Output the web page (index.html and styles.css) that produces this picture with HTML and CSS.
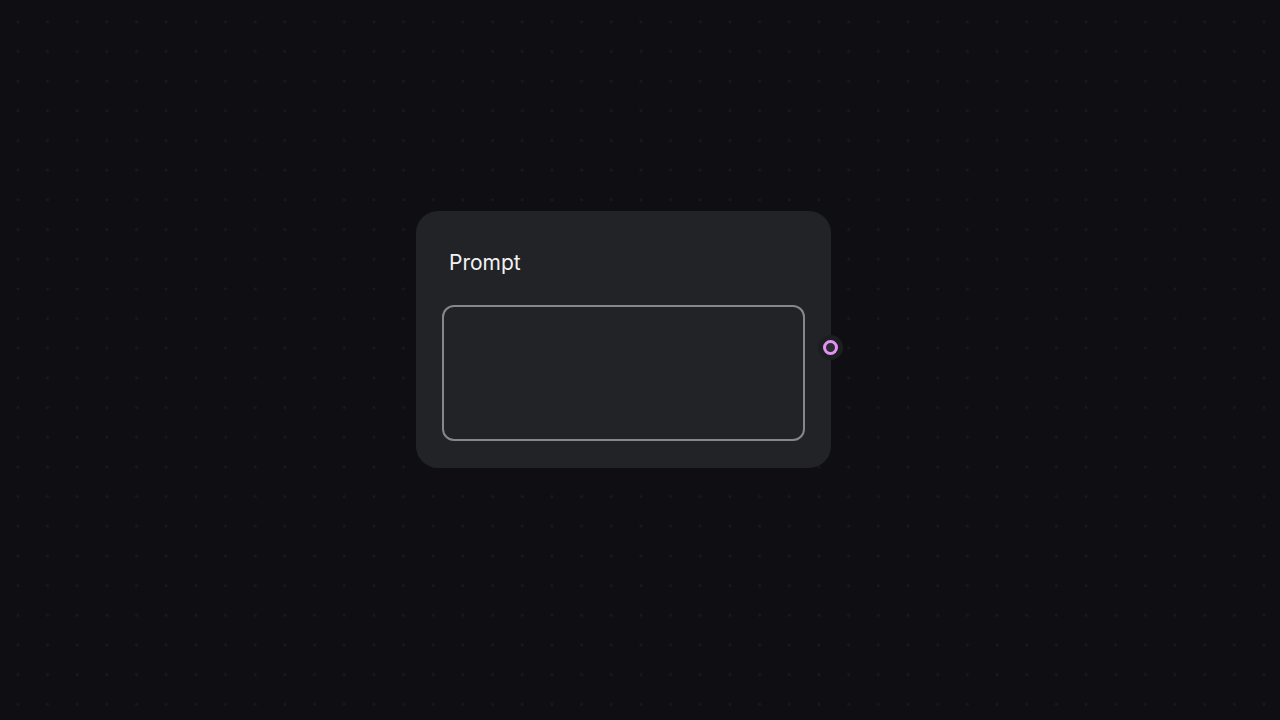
FILE: index.html
```html
<!DOCTYPE html>
<html lang="en">

<head>
    <meta charset="UTF-8">
    <meta name="viewport" content="width=device-width, initial-scale=1.0">
    <title>Prompt Node</title>
    <link rel="stylesheet" href="styles.css">
</head>

<body>
    <div id="canvas">
        <div class="node">
            <h3 class="node-title">Prompt</h3>
            <textarea class="node-input"></textarea>
            <div class="handle"></div>
        </div>
    </div>
</body>

</html>
```

FILE: styles.css
```css
body {
    margin: 0;
    padding: 0;
    font-family: 'Inter', 'Noto Sans', sans-serif;
    background-color: #0f0f13;
    overflow: hidden;
}

#canvas {
    position: relative;
    width: 1280px;
    height: 720px;
    background-color: #0f0f13;
    background-image: radial-gradient(circle, #19191f 1.3px, transparent 1.7px);
    background-size: 29.675px 29.675px;
    background-position: 3px 7px;
}

.node {
    position: absolute;
    left: 416px;
    top: 211px;
    width: 415px;
    height: 257px;
    box-sizing: border-box;
    padding: 0 26px 27px;
    background-color: #222327;
    border-radius: 22px;
    display: flex;
    flex-direction: column;
}

.node-title {
    margin: 0;
    padding: 40px 0 0 7px;
    height: 55px;
    box-sizing: border-box;
    font-size: 21px;
    font-weight: 400;
    line-height: 24px;
    color: #f2f2f4;
}

.node-input {
    flex: 1;
    margin-top: 39px;
    border: 2px solid #86868b;
    border-radius: 12px;
    background-color: transparent;
    resize: none;
    outline: none;
}

.handle {
    position: absolute;
    right: -7px;
    top: 129px;
    width: 9px;
    height: 9px;
    border: 3px solid #e293f2;
    border-radius: 50%;
    background-color: #2b2b31;
    box-shadow: 0 0 0 5px #1d1e22;
}
```
